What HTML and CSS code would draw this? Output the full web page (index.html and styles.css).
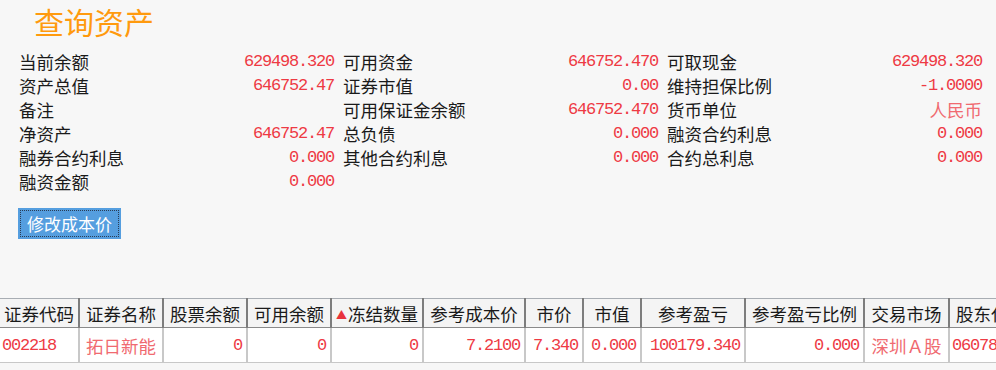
FILE: index.html
```html
<!DOCTYPE html>
<html lang="zh-CN">
<head>
    <meta charset="UTF-8">
    <title>查询资产</title>
    <link rel="stylesheet" href="styles.css">
</head>
<body>
    <div class="page">
        <h1 class="title">查询资产</h1>

        <div class="summary">
            <div class="item"><span class="label">当前余额</span><span class="value">629498.320</span></div>
            <div class="item"><span class="label">可用资金</span><span class="value">646752.470</span></div>
            <div class="item"><span class="label">可取现金</span><span class="value">629498.320</span></div>

            <div class="item"><span class="label">资产总值</span><span class="value">646752.47</span></div>
            <div class="item"><span class="label">证券市值</span><span class="value">0.00</span></div>
            <div class="item"><span class="label">维持担保比例</span><span class="value">-1.0000</span></div>

            <div class="item"><span class="label">备注</span><span class="value"></span></div>
            <div class="item"><span class="label">可用保证金余额</span><span class="value">646752.470</span></div>
            <div class="item"><span class="label">货币单位</span><span class="value cn">人民币</span></div>

            <div class="item"><span class="label">净资产</span><span class="value">646752.47</span></div>
            <div class="item"><span class="label">总负债</span><span class="value">0.000</span></div>
            <div class="item"><span class="label">融资合约利息</span><span class="value">0.000</span></div>

            <div class="item"><span class="label">融券合约利息</span><span class="value">0.000</span></div>
            <div class="item"><span class="label">其他合约利息</span><span class="value">0.000</span></div>
            <div class="item"><span class="label">合约总利息</span><span class="value">0.000</span></div>

            <div class="item"><span class="label">融资金额</span><span class="value">0.000</span></div>
        </div>

        <button class="edit-btn">修改成本价</button>

        <div class="grid-wrap">
            <table class="grid">
                <colgroup>
                    <col style="width:79px">
                    <col style="width:84px">
                    <col style="width:84px">
                    <col style="width:84px">
                    <col style="width:92px">
                    <col style="width:102px">
                    <col style="width:58px">
                    <col style="width:58px">
                    <col style="width:104px">
                    <col style="width:119px">
                    <col style="width:85px">
                    <col style="width:90px">
                </colgroup>
                <thead>
                    <tr>
                        <th>证券代码</th>
                        <th>证券名称</th>
                        <th>股票余额</th>
                        <th>可用余额</th>
                        <th class="sorted"><span class="arrow">▲</span>冻结数量</th>
                        <th>参考成本价</th>
                        <th>市价</th>
                        <th>市值</th>
                        <th>参考盈亏</th>
                        <th>参考盈亏比例</th>
                        <th>交易市场</th>
                        <th class="left">股东代码</th>
                    </tr>
                </thead>
                <tbody>
                    <tr>
                        <td class="num left">002218</td>
                        <td class="cn center">拓日新能</td>
                        <td class="num">0</td>
                        <td class="num">0</td>
                        <td class="num">0</td>
                        <td class="num">7.2100</td>
                        <td class="num">7.340</td>
                        <td class="num">0.000</td>
                        <td class="num">100179.340</td>
                        <td class="num">0.000</td>
                        <td class="cn center">深圳Ａ股</td>
                        <td class="num left">0607800000</td>
                    </tr>
                </tbody>
            </table>
        </div>
    </div>
</body>
</html>
```

FILE: styles.css
```css
html, body {
    margin: 0;
    padding: 0;
    background: #f7f7f7;
    overflow: hidden;
}

body {
    font-family: 'Noto Sans CJK SC', sans-serif;
    font-size: 17.5px;
    color: #1a1a1a;
}

.page {
    width: 996px;
    height: 370px;
    overflow: hidden;
}

.title {
    margin: 0;
    padding: 2px 0 0 34px;
    height: 48px;
    font-size: 30px;
    font-weight: normal;
    line-height: 38px;
    color: #ff9a0e;
}

.summary {
    display: grid;
    grid-template-columns: repeat(3, 315px);
    column-gap: 9px;
    padding-left: 19px;
}

.item {
    display: flex;
    justify-content: space-between;
    align-items: center;
    height: 24px;
    line-height: 24px;
}

.value {
    font-family: 'Liberation Mono', monospace;
    font-size: 17px;
    letter-spacing: -1.2px;
    color: #ee3a44;
}

.value.cn {
    font-family: 'Noto Sans CJK SC', sans-serif;
    font-size: 17.5px;
    letter-spacing: 0;
    color: #f06a70;
}

.edit-btn {
    display: block;
    margin: 14px 0 0 18px;
    width: 103px;
    height: 31px;
    padding: 0;
    background: #559edf;
    border: 1px solid #559edf;
    outline: 1px dotted #2a3d55;
    outline-offset: -3px;
    color: #ffffff;
    font-family: 'Noto Sans CJK SC', sans-serif;
    font-size: 17px;
    line-height: 27px;
    cursor: pointer;
}

.grid-wrap {
    margin-top: 59px;
    width: 996px;
    overflow: hidden;
}

.grid {
    table-layout: fixed;
    width: 1039px;
    border-collapse: collapse;
}

.grid th {
    height: 28px;
    padding: 0;
    background: #f4f4f4;
    border-top: 1px solid #a8adb3;
    border-bottom: 1px solid #8a8a8a;
    border-right: 2px solid #7d7d7d;
    font-weight: normal;
    font-size: 17.5px;
    color: #1a1a1a;
    text-align: center;
    white-space: nowrap;
    overflow: hidden;
}

.grid th.left {
    text-align: left;
    padding-left: 6px;
}

.grid th .arrow {
    color: #e8323c;
    font-size: 11px;
    vertical-align: 2px;
    margin-right: 1px;
}

.grid td {
    height: 33px;
    padding: 1px 4px 0 2px;
    background: #ffffff;
    border-right: 2px solid #c8c8c8;
    border-bottom: 1px solid #c8c8c8;
    color: #ee3a44;
    text-align: right;
    white-space: nowrap;
    overflow: hidden;
}

.grid td.num {
    font-family: 'Liberation Mono', monospace;
    font-size: 17px;
    letter-spacing: -1.2px;
}

.grid td.cn {
    color: #f06a70;
    font-size: 17.5px;
}

.grid td.left {
    text-align: left;
}

.grid td.center {
    text-align: center;
    padding: 0;
}
```
